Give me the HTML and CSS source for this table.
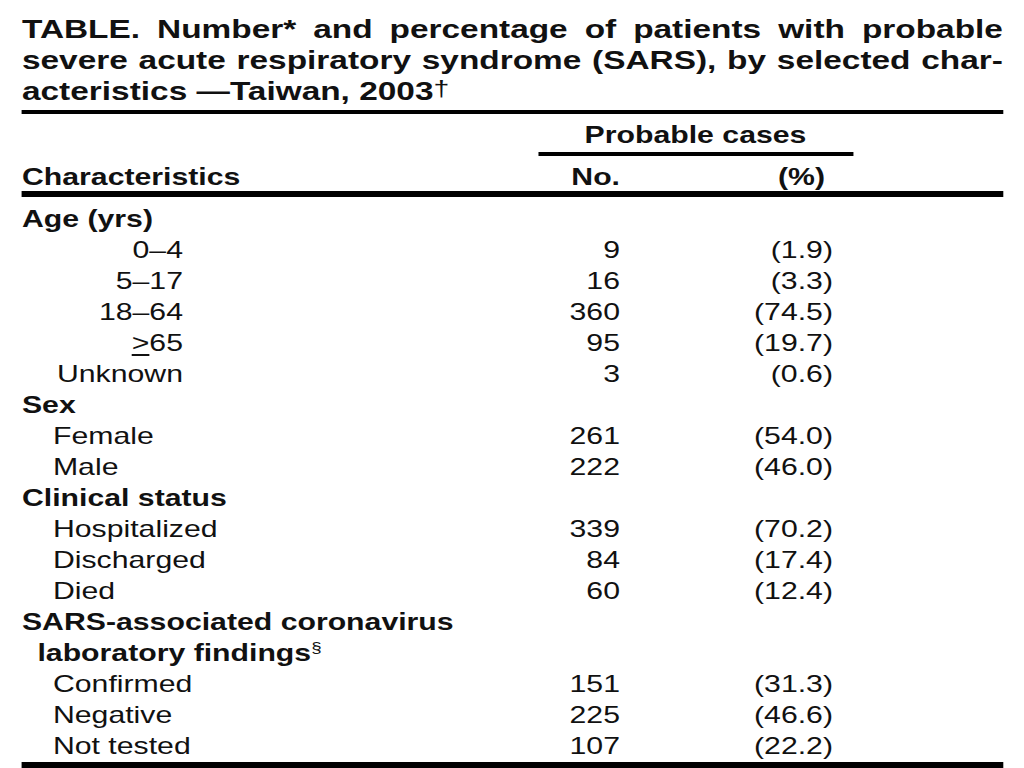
FILE: index.html
```html
<!DOCTYPE html>
<html lang="en">
<head>
<meta charset="utf-8">
<title>SARS Taiwan 2003 table</title>
<link rel="stylesheet" href="styles.css">
</head>
<body>
<div class="page">
  <h1 class="title">
    <span class="tline just">TABLE. Number* and percentage of patients with probable</span>
    <span class="tline just">severe acute respiratory syndrome (SARS), by selected char-</span>
    <span class="tline">acteristics —Taiwan, 2003<sup class="mark">†</sup></span>
  </h1>
  <div class="thead">
    <div class="spanrow"><div class="spanner">Probable cases</div></div>
    <div class="row hrow">
      <div class="lab bold">Characteristics</div>
      <div class="num bold">No.</div>
      <div class="pct bold hpct">(%)</div>
    </div>
  </div>
  <div class="tbody">
    <div class="row"><div class="lab bold">Age (yrs)</div></div>
    <div class="row"><div class="lab"><span class="age">0–4</span></div><div class="num">9</div><div class="pct">(1.9)</div></div>
    <div class="row"><div class="lab"><span class="age">5–17</span></div><div class="num">16</div><div class="pct">(3.3)</div></div>
    <div class="row"><div class="lab"><span class="age">18–64</span></div><div class="num">360</div><div class="pct">(74.5)</div></div>
    <div class="row"><div class="lab"><span class="age"><span class="ge">&gt;</span>65</span></div><div class="num">95</div><div class="pct">(19.7)</div></div>
    <div class="row"><div class="lab"><span class="age">Unknown</span></div><div class="num">3</div><div class="pct">(0.6)</div></div>
    <div class="row"><div class="lab bold">Sex</div></div>
    <div class="row"><div class="lab sub">Female</div><div class="num">261</div><div class="pct">(54.0)</div></div>
    <div class="row"><div class="lab sub">Male</div><div class="num">222</div><div class="pct">(46.0)</div></div>
    <div class="row"><div class="lab bold">Clinical status</div></div>
    <div class="row"><div class="lab sub">Hospitalized</div><div class="num">339</div><div class="pct">(70.2)</div></div>
    <div class="row"><div class="lab sub">Discharged</div><div class="num">84</div><div class="pct">(17.4)</div></div>
    <div class="row"><div class="lab sub">Died</div><div class="num">60</div><div class="pct">(12.4)</div></div>
    <div class="row"><div class="lab bold">SARS-associated coronavirus</div></div>
    <div class="row"><div class="lab bold cont">laboratory findings<sup class="mark small">§</sup></div></div>
    <div class="row"><div class="lab sub">Confirmed</div><div class="num">151</div><div class="pct">(31.3)</div></div>
    <div class="row"><div class="lab sub">Negative</div><div class="num">225</div><div class="pct">(46.6)</div></div>
    <div class="row"><div class="lab sub">Not tested</div><div class="num">107</div><div class="pct">(22.2)</div></div>
  </div>
</div>
</body>
</html>
```
FILE: styles.css
```css
html, body {
  margin: 0;
  padding: 0;
  background: #ffffff;
}

body {
  width: 1024px;
  height: 768px;
  overflow: hidden;
  font-family: "Liberation Sans", Arial, Helvetica, sans-serif;
  color: #111111;
}

/* The source scan is stretched horizontally; the whole sheet is drawn
   at natural width and widened by the same factor. */
.page {
  width: 772.4px;
  padding: 14.4px 0 0 17.3px;
  transform: scaleX(1.27);
  transform-origin: 0 0;
}

.title {
  margin: 0;
  padding-bottom: 2.6px;
  border-bottom: 4px solid #000;
  font-size: 26.3px;
  font-weight: 700;
  line-height: 31px;
}

.tline {
  display: block;
  white-space: nowrap;
}

.tline.just {
  text-align: justify;
  text-align-last: justify;
}

.mark {
  font-size: 0.85em;
  line-height: 0;
  vertical-align: 0.18em;
  font-weight: 400;
}

.mark.small {
  font-size: 0.62em;
  vertical-align: 0.55em;
}

.thead {
  border-bottom: 6px solid #000;
  font-size: 23.8px;
}

.spanrow {
  display: flex;
  padding-top: 5.2px;
}

.spanner {
  margin-left: 406.3px;
  width: 248.1px;
  text-align: center;
  font-weight: 700;
  line-height: 31px;
  padding-bottom: 1.8px;
  border-bottom: 4px solid #000;
}

.row {
  display: flex;
  line-height: 31px;
  font-size: 23.8px;
  white-space: nowrap;
}

.hrow {
  line-height: 29px;
  padding-top: 6.2px;
}

.tbody {
  padding-top: 5.4px;
  padding-bottom: 1.6px;
  border-bottom: 6px solid #000;
}

.lab {
  width: 406.3px;
  flex: none;
}

.num {
  width: 64.6px;
  flex: none;
  text-align: right;
}

.pct {
  width: 167.7px;
  flex: none;
  text-align: right;
}

.hpct {
  padding-right: 6.3px;
  box-sizing: border-box;
}

.bold {
  font-weight: 700;
}

.sub {
  padding-left: 24.4px;
  box-sizing: border-box;
}

.cont {
  padding-left: 12.2px;
  box-sizing: border-box;
}

.age {
  display: inline-block;
  width: 126.8px;
  text-align: right;
}

.ge {
  text-decoration: underline;
  text-decoration-thickness: 1.5px;
  text-underline-offset: 3px;
}
```
